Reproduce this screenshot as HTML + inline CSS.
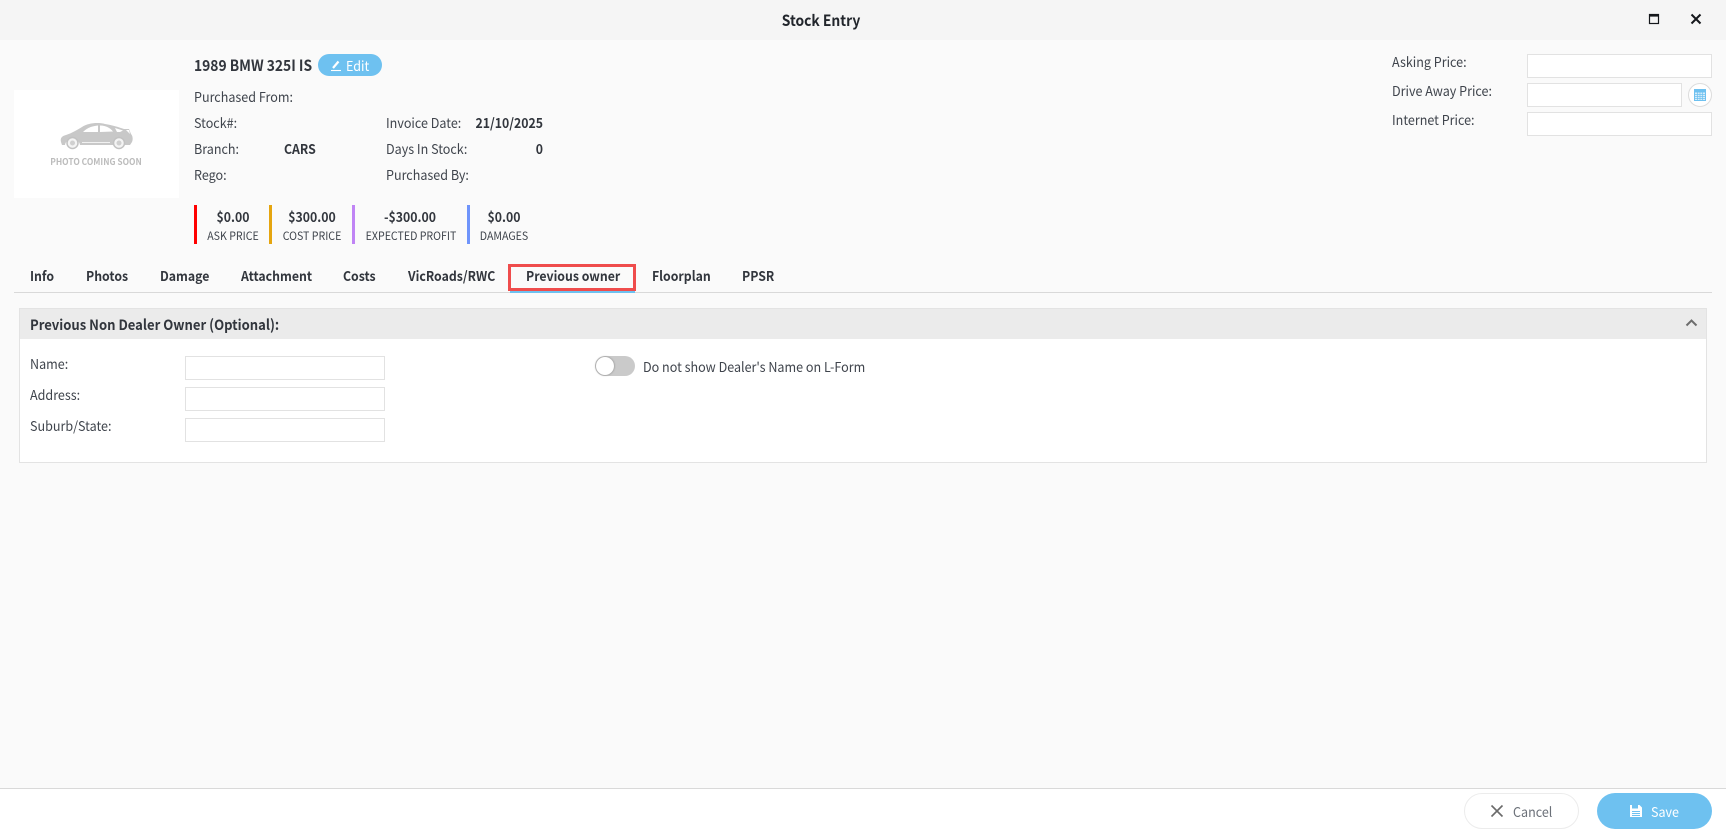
<!DOCTYPE html>
<html><head><meta charset="utf-8">
<style>
*{box-sizing:border-box;margin:0;padding:0}
html,body{width:1726px;height:833px;overflow:hidden;background:#fafafa;font-family:"Noto Sans CJK SC","Liberation Sans",sans-serif;color:#3f444c}
.t{position:absolute;white-space:nowrap;font-size:13.5px;line-height:20px;height:20px;transform:scaleX(.93);transform-origin:left center}
.b{font-weight:700;color:#32363d;transform:scaleX(.91)}
.c{transform:translateX(-50%) scaleX(.93);transform-origin:center}
.b.c{transform:translateX(-50%) scaleX(.91)}
.r{transform:translateX(-100%) scaleX(.91);transform-origin:right center}
.box{position:absolute;background:#fff;border:1px solid #e2e2e2}
.abs{position:absolute}
</style></head><body>
<div class="abs" style="left:0;top:0;width:1726px;height:40px;background:#f5f5f5"></div>
<div class="t b c" style="left:821px;top:10px;font-size:15.2px;color:#22262c">Stock Entry</div>
<svg class="abs" style="left:1648px;top:13px" width="12" height="12" viewBox="0 0 12 12"><rect x="1.5" y="1.5" width="9" height="9" fill="none" stroke="#15181c" stroke-width="1.2"/><rect x="1" y="1" width="10" height="2.6" fill="#15181c"/></svg>
<svg class="abs" style="left:1690px;top:13px" width="12" height="12" viewBox="0 0 12 12"><path d="M1.5 1.5L10.5 10.5M10.5 1.5L1.5 10.5" stroke="#15181c" stroke-width="2"/></svg>

<div class="abs" style="left:14px;top:90px;width:165px;height:108px;background:#fff"></div>
<svg class="abs" style="left:60px;top:122px" width="74" height="28" viewBox="0 0 74 28"><path d="M1 20C0 16 2 14 6 13C12 11 17 8 22 5C28 1 38 0 45 2C52 3 58 5 64 7L69 7L71 12C73 14 73 18 72 20L70 23H65C64 15 54 15 53 23H20C19 15 6 15 5 23H2Z" fill="#c8c8c8"/><path d="M23 10C27 6 32 4 38 3.500L38 10ZM40 3.500C45 3.500 50 5.500 53 9.500L40 10ZM55 6L63 8.500L60 10H57Z" fill="#fff"/><path d="M66 8L69 8L70 12Z" fill="#fff"/><circle cx="12.500" cy="21" r="5.500" fill="#f4f4f4" stroke="#c2c2c2" stroke-width="1.500"/><circle cx="12.500" cy="21" r="2.500" fill="#d0d0d0"/><circle cx="59" cy="21" r="5.500" fill="#f4f4f4" stroke="#c2c2c2" stroke-width="1.500"/><circle cx="59" cy="21" r="2.500" fill="#d0d0d0"/><path d="M22 20.500H50" stroke="#fff" stroke-width=".8"/></svg>
<div class="t c" style="left:96px;top:152px;font-size:9px;font-weight:700;color:#bcbcbc">PHOTO COMING SOON</div>

<div class="t b" style="left:194px;top:55px;font-size:15.2px">1989 BMW 325I IS</div>
<div class="abs" style="left:318px;top:54px;width:64px;height:22px;border-radius:11px;background:#6ec1f0"></div>
<svg class="abs" style="left:330px;top:58px" width="13" height="14" viewBox="0 0 13 14"><path d="M3 10L8.500 3.500" fill="none" stroke="#fff" stroke-width="2.200"/><path d="M1 12.500H11" fill="none" stroke="#fff" stroke-width="1.100"/></svg>
<div class="t" style="left:346px;top:55px;color:#fff;font-size:13.5px">Edit</div>

<div class="t" style="left:194px;top:86px">Purchased From:</div>
<div class="t" style="left:194px;top:112px">Stock#:</div>
<div class="t" style="left:194px;top:138px">Branch:</div>
<div class="t" style="left:194px;top:164px">Rego:</div>
<div class="t b" style="left:284px;top:138px">CARS</div>
<div class="t" style="left:386px;top:112px">Invoice Date:</div>
<div class="t" style="left:386px;top:138px">Days In Stock:</div>
<div class="t" style="left:386px;top:164px">Purchased By:</div>
<div class="t b r" style="left:543px;top:112px">21/10/2025</div>
<div class="t b r" style="left:543px;top:138px">0</div>

<div class="abs" style="left:194px;top:205px;width:3px;height:39px;background:#f00"></div>
<div class="abs" style="left:269px;top:205px;width:3px;height:39px;background:#e5a50f"></div>
<div class="abs" style="left:352px;top:205px;width:3px;height:39px;background:#c084f5"></div>
<div class="abs" style="left:467px;top:205px;width:3px;height:39px;background:#6f94fb"></div>
<div class="t b c" style="left:233px;top:205.500px">$0.00</div>
<div class="t b c" style="left:312px;top:205.500px">$300.00</div>
<div class="t b c" style="left:410px;top:205.500px">-$300.00</div>
<div class="t b c" style="left:504px;top:205.500px">$0.00</div>
<div class="t c" style="left:233px;top:226px;font-size:11.400px">ASK PRICE</div>
<div class="t c" style="left:312px;top:226px;font-size:11.400px">COST PRICE</div>
<div class="t c" style="left:410.500px;top:226px;font-size:11.400px">EXPECTED PROFIT</div>
<div class="t c" style="left:504px;top:226px;font-size:11.400px">DAMAGES</div>

<div class="t" style="left:1392px;top:51px">Asking Price:</div>
<div class="t" style="left:1392px;top:80px">Drive Away Price:</div>
<div class="t" style="left:1392px;top:109px">Internet Price:</div>
<div class="box" style="left:1527px;top:54px;width:185px;height:24px"></div>
<div class="box" style="left:1527px;top:83px;width:155px;height:24px"></div>
<div class="box" style="left:1527px;top:112px;width:185px;height:24px"></div>
<div class="abs" style="left:1688px;top:83px;width:24px;height:24px;border-radius:50%;background:#fff;border:1px solid #dcdcdc"></div>
<svg class="abs" style="left:1694px;top:89px" width="12" height="12" viewBox="0 0 12 12"><rect x=".5" y=".5" width="11" height="11" fill="#d6edfb" stroke="#6ec1f0"/><rect x="1" y="1" width="10" height="2.500" fill="#6ec1f0"/><path d="M1 5.500H11M1 7.500H11M1 9.500H11M3.500 3.500V11M6 3.500V11M8.500 3.500V11" stroke="#6ec1f0" stroke-width=".7"/></svg>

<div class="t b" style="left:30px;top:265px">Info</div>
<div class="t b" style="left:86px;top:265px">Photos</div>
<div class="t b" style="left:160px;top:265px">Damage</div>
<div class="t b" style="left:241px;top:265px">Attachment</div>
<div class="t b" style="left:343px;top:265px">Costs</div>
<div class="t b" style="left:407.500px;top:265px">VicRoads/RWC</div>
<div class="t b" style="left:526px;top:265px">Previous owner</div>
<div class="t b" style="left:652px;top:265px">Floorplan</div>
<div class="t b" style="left:742px;top:265px">PPSR</div>
<div class="abs" style="left:14px;top:292px;width:1698px;height:1px;background:#d9d9d9"></div>
<div class="abs" style="left:510px;top:291px;width:125px;height:2px;background:#6ec1f0"></div>
<div class="abs" style="left:508px;top:264px;width:128px;height:27px;border:3px solid #ef4c4c"></div>

<div class="abs" style="left:19px;top:308px;width:1688px;height:155px;background:#fff;border:1px solid #e3e3e3"></div>
<div class="abs" style="left:20px;top:309px;width:1686px;height:30px;background:#ebebeb"></div>
<div class="t b" style="left:30px;top:315px;font-size:14.350px">Previous Non Dealer Owner (Optional):</div>
<svg class="abs" style="left:1685px;top:318px" width="13" height="9" viewBox="0 0 13 9"><path d="M1.500 7.500L6.500 2.500L11.500 7.500" fill="none" stroke="#6d6d6d" stroke-width="2"/></svg>
<div class="t" style="left:30px;top:353px">Name:</div>
<div class="t" style="left:30px;top:384px">Address:</div>
<div class="t" style="left:30px;top:415px">Suburb/State:</div>
<div class="box" style="left:185px;top:356px;width:200px;height:24px"></div>
<div class="box" style="left:185px;top:387px;width:200px;height:24px"></div>
<div class="box" style="left:185px;top:418px;width:200px;height:24px"></div>
<div class="abs" style="left:595px;top:356px;width:40px;height:20px;border-radius:10px;background:#cacaca"></div>
<div class="abs" style="left:596px;top:357px;width:18px;height:18px;border-radius:50%;background:#fff;box-shadow:0 0 2px rgba(0,0,0,.4)"></div>
<div class="t" style="left:643px;top:356px">Do not show Dealer's Name on L-Form</div>

<div class="abs" style="left:0;top:788px;width:1726px;height:45px;background:#fff;border-top:1px solid #d9d9d9"></div>
<div class="abs" style="left:1464px;top:793px;width:115px;height:36px;border-radius:18px;background:#fff;border:1px solid #ececec"></div>
<svg class="abs" style="left:1490px;top:804px" width="14" height="14" viewBox="0 0 14 14"><path d="M1.500 1.500L12.500 12.500M12.500 1.500L1.500 12.500" stroke="#6a6a6a" stroke-width="1.600"/></svg>
<div class="t" style="left:1513px;top:801px;color:#6b7078">Cancel</div>
<div class="abs" style="left:1597px;top:793px;width:115px;height:36px;border-radius:18px;background:#6ec1f0"></div>
<svg class="abs" style="left:1629px;top:804px" width="14" height="14" viewBox="0 0 14 14"><path d="M1 1H3V4.500H9V1H10.500L13 3.500V13H1Z" fill="#fff"/><path d="M3 7.500H11M3 9.500H11M3 11.500H11" stroke="#6ec1f0" stroke-width=".9"/></svg>
<div class="t" style="left:1651px;top:801px;color:#fff">Save</div>
</body></html>
